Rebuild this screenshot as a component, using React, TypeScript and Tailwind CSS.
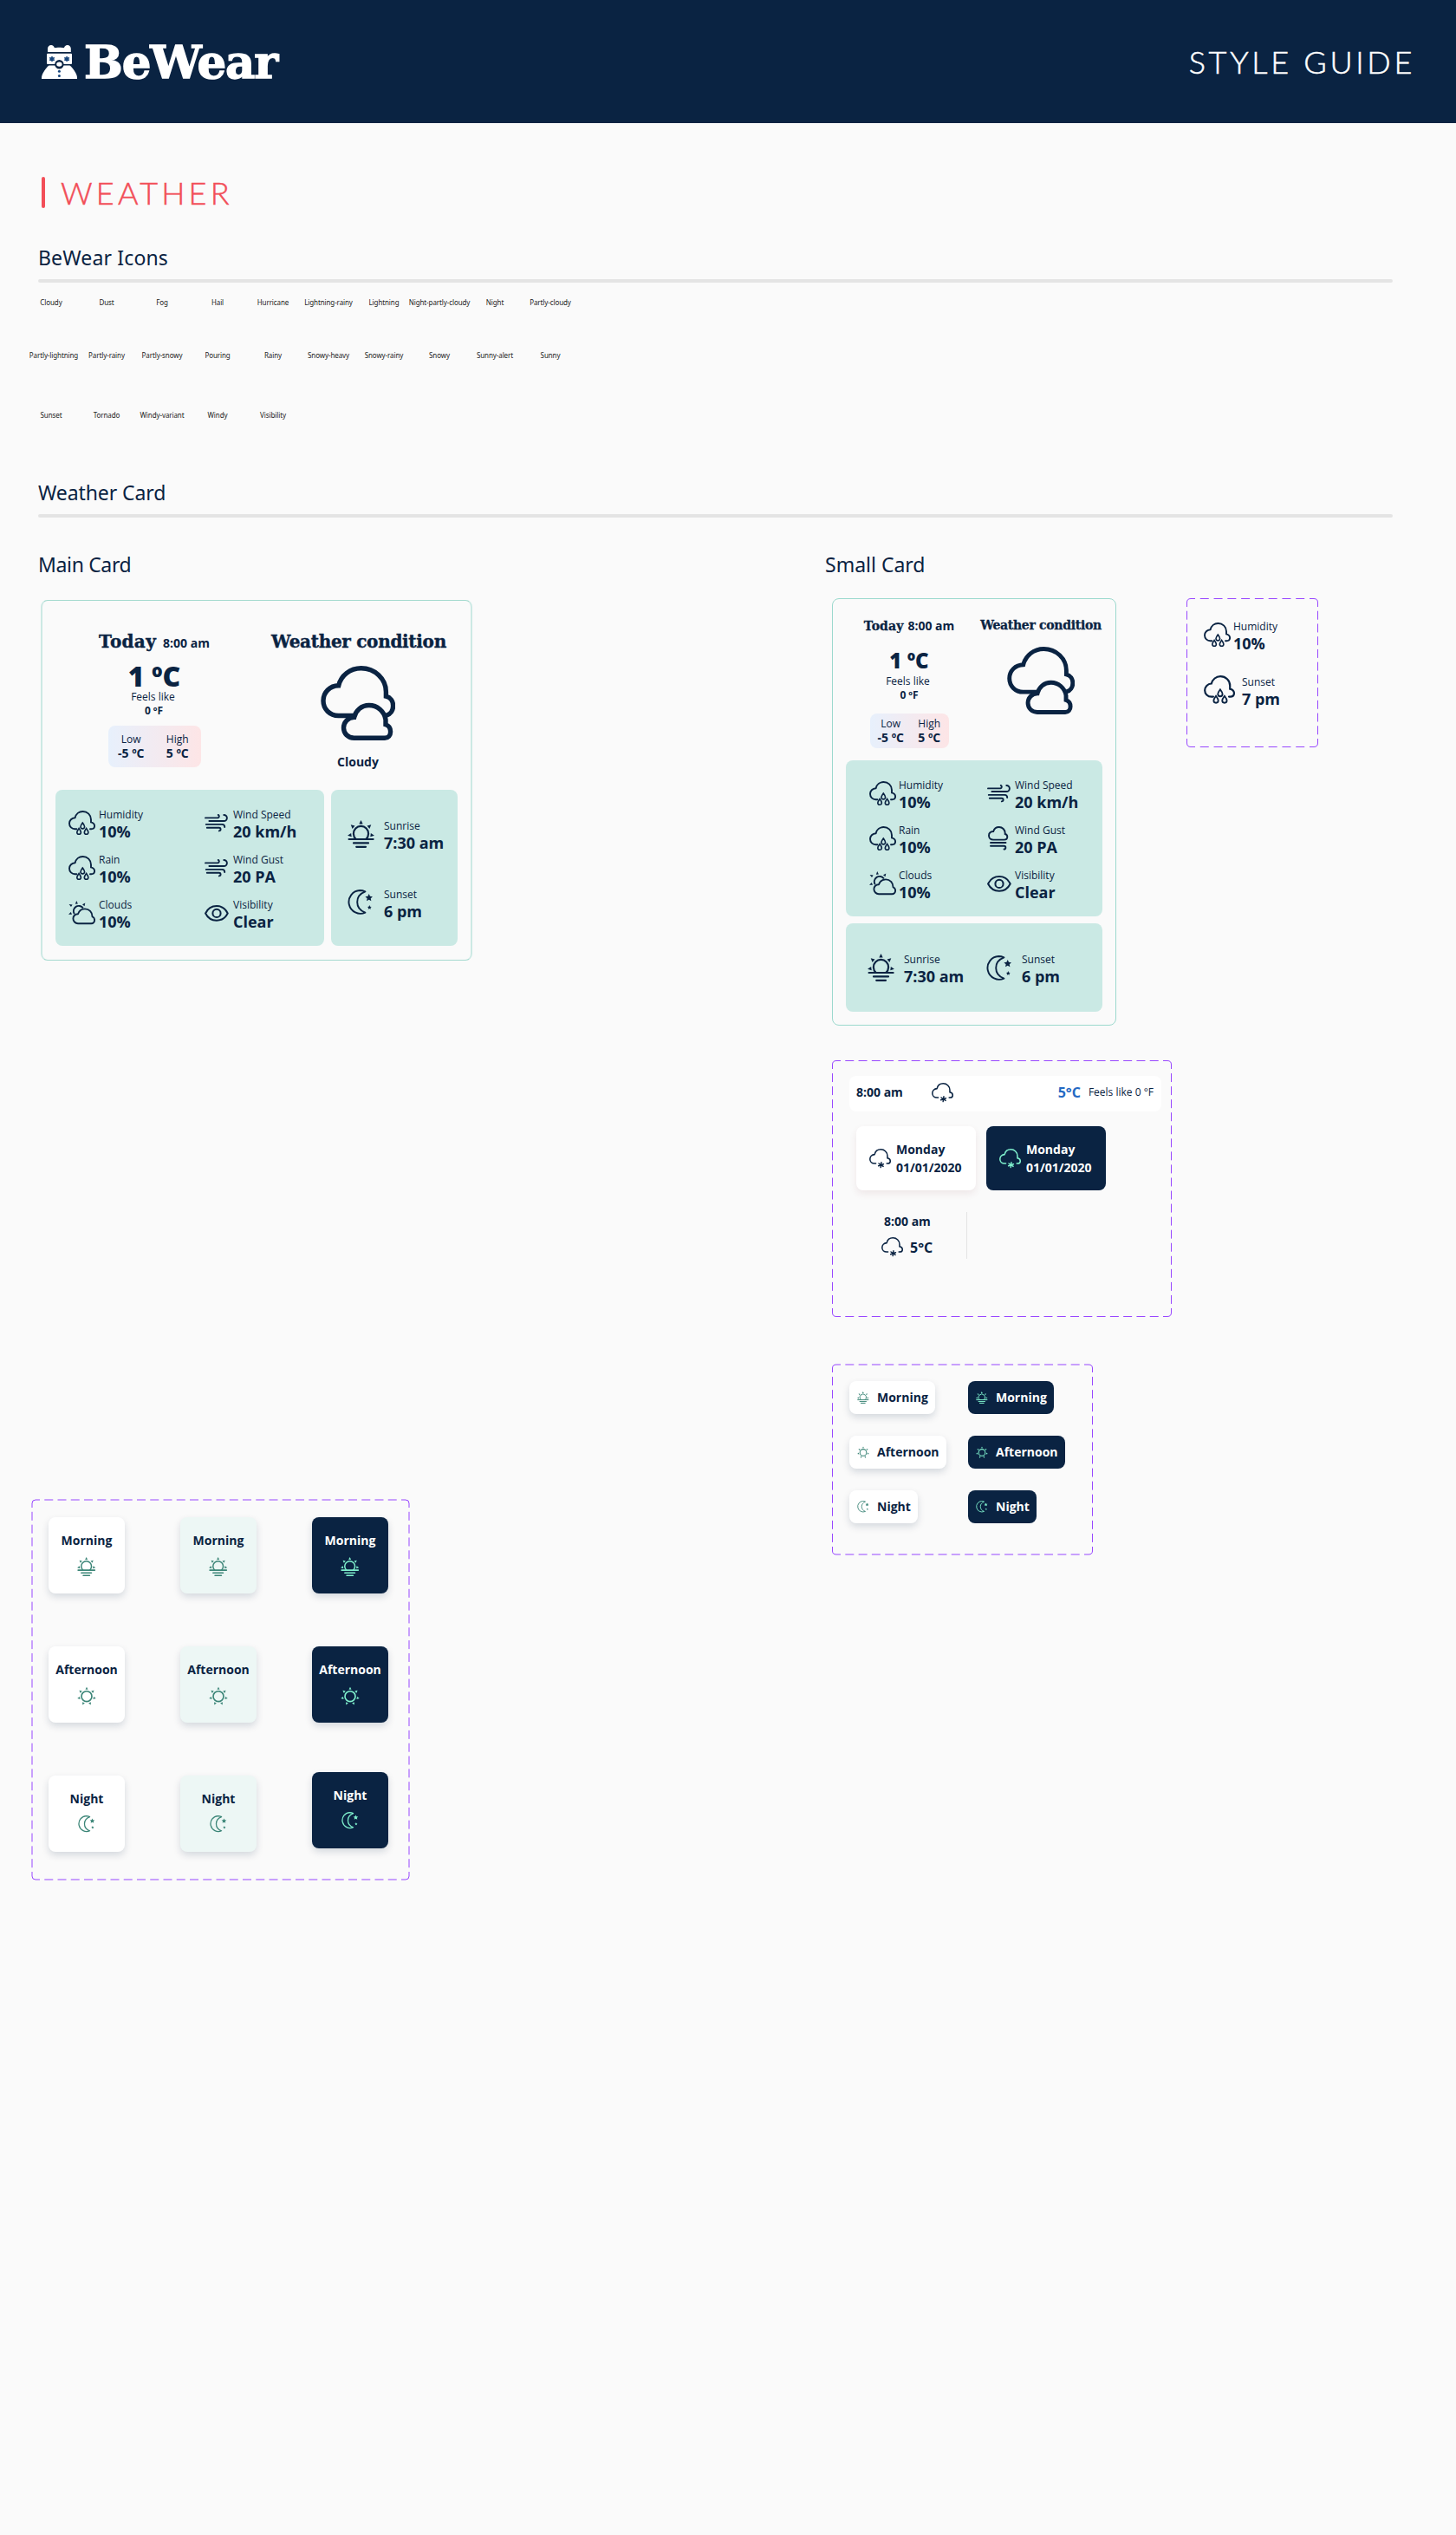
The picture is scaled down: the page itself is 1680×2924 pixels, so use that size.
import React from "react";

const NAVY = "#0a2342";
const TEAL = "#3b8577";
const MINT = "#7ff0cd";

const body = "font-['Open_Sans','Noto_Sans',sans-serif]";
const serif = "font-['DejaVu_Serif',serif] font-bold";

type IconProps = { color?: string; size?: number };

function CloudyIcon({ size = 86 }: IconProps) {
  return (
    <svg width={size} height={size} viewBox="0 0 86 86" fill="none" stroke={NAVY} strokeWidth="5.4" className="shrink-0">
      <path d="M39 57.5H20.5C10.5 57.5 3 50 3 40.3S10.5 23 20.7 22.8C23.5 11 34 2.8 46.7 2.8C62.5 2.8 75.4 15 75.4 30V35.2C80.5 36.5 83.6 41 83.6 46C83.6 51.5 80.5 56 75.5 57.3" />
      <path d="M38.7 59.3C31.5 59.5 26.5 65 26.5 71.5S31.5 83.2 38.5 83.2H74C78 83.2 80.6 80 80.6 76C80.6 72 78.5 69 75 67.8V62C73.5 52.5 65.5 45.5 55.8 45.5C47 45.5 40.5 51.5 38.7 59.3Z" />
    </svg>
  );
}

const CLOUD = "M9.4 21.2H7.6C3.8 21.2 1 18.3 1 14.8S3.8 8.4 7.6 8.2C8.6 4 12.2 1 16.5 1C21.8 1 26 5 26 10.2V13.4C28.4 14 30.1 15.6 30.1 17.7C30.1 19.8 28.7 21.2 26.3 21.2H25";

function Drop({ x, y }: { x: number; y: number }) {
  return (
    <path
      transform={`translate(${x} ${y})`}
      d="M0-3.6C1.5-1.6 2.3-.2 2.3 1A2.3 2.3 0 1 1-2.3 1C-2.3-.2-1.5-1.6 0-3.6Z"
    />
  );
}

function RainIcon({ size = 31 }: IconProps) {
  return (
    <svg width={size} height={(size * 29) / 31} viewBox="0 0 31 29" fill="none" stroke={NAVY} strokeWidth="1.9" strokeLinecap="round" className="shrink-0">
      <path d={CLOUD} />
      <g strokeWidth="1.6">
        <Drop x={16.3} y={17.6} />
        <Drop x={12.1} y={24} />
        <Drop x={20.6} y={24} />
      </g>
    </svg>
  );
}

function SnowIcon({ color = NAVY }: IconProps) {
  return (
    <svg width="25" height="23" viewBox="0 0 31 28.5" fill="none" stroke={color} strokeWidth="1.9" strokeLinecap="round" className="shrink-0">
      <path d={CLOUD} />
      <path strokeWidth="1.8" d="M16.8 19.6V26.8M13.4 21.5L20.2 24.9M20.2 21.5L13.4 24.9" transform="rotate(8 16.8 23.2)" />
    </svg>
  );
}

function WindIcon() {
  return (
    <svg width="27" height="21" viewBox="0 0 27 21" fill="none" stroke={NAVY} strokeWidth="1.9" strokeLinecap="round" className="shrink-0">
      <path d="M1 4.4H15.4A1.9 1.9 0 0 0 15.8.9" />
      <path d="M5.4 8H22.3A3.6 3.5 0 0 0 22.3 1" />
      <path d="M1.8 11.9H20.2A3.2 3 0 0 1 23.2 15" />
      <path d="M2.8 15.8H16.8A1.8 1.8 0 0 1 16.8 19.4" />
    </svg>
  );
}

function GustIcon() {
  return (
    <svg width="24" height="28" viewBox="0 0 24 28" fill="none" stroke={NAVY} strokeWidth="1.9" strokeLinecap="round" className="shrink-0">
      <path d="M6 15.6H18.6C20.8 15.6 22.3 14.2 22.3 12.3C22.3 10.6 21.2 9.4 19.7 9V7.8C19.7 4 16.6 1 12.8 1C9.6 1 7 3 6.2 6C3 6.2 1 8 1 10.8S3 15.6 6 15.6Z" />
      <path d="M3 19H20.5M3 22.8H18.5A1.8 1.8 0 0 1 18.5 26.5" />
    </svg>
  );
}

function PartlyIcon() {
  return (
    <svg width="31" height="28" viewBox="0 0 31 28" fill="none" stroke={NAVY} strokeWidth="1.9" strokeLinejoin="round" className="shrink-0">
      <path d="M11 26.2H26.2C28.6 26.2 30.1 24.3 30.1 22.2C30.1 20.4 29.2 19 27.6 18.4C27.6 13 23.8 9.4 19 9.4C15 9.4 12.2 11.8 11 15.2C7.6 15.2 5.4 17.6 5.4 20.6S7.8 26.2 11 26.2Z" />
      <path d="M6.8 15.2A6 6 0 1 1 16.9 8.6" />
      <path fill={NAVY} stroke="none" d="M9.2 0L10.9 3.5L7.9 3.7ZM19.3 2.4L18.5 6.2L16 4.2ZM.6 4L4.6 4.5L3 7ZM0 15.8L2.8 12.9L4 15.8Z" />
    </svg>
  );
}

function EyeIcon() {
  return (
    <svg width="28" height="19" viewBox="0 0 28 19" fill="none" stroke={NAVY} strokeWidth="2" className="shrink-0">
      <path d="M1.1 9.5C3.6 4.3 8.4 1.1 14 1.1S24.2 4.3 26.7 9.5C24.2 14.5 19.5 17.7 14 17.7S3.6 14.5 1.1 9.5Z" />
      <circle cx="14" cy="9.4" r="4.6" />
    </svg>
  );
}

function Ray({ angle, cx, cy, r }: { angle: number; cx: number; cy: number; r: number }) {
  return <path transform={`rotate(${angle} ${cx} ${cy})`} d={`M${cx} ${cy - r - 4.4}L${cx + 2.2} ${cy - r}H${cx - 2.2}Z`} stroke="none" />;
}

function SunriseIcon({ color = NAVY, size = 32 }: IconProps) {
  return (
    <svg width={size} height={size} viewBox="0 0 32 32" fill="none" stroke={color} strokeWidth="2.2" strokeLinecap="round" className="shrink-0">
      <path d="M9.6 21.8A8.6 8.6 0 1 1 21.4 21.8" />
      <path d="M1.6 22H29.6M7 26.4H24M10.2 30.8H21" />
      <g fill={color}>
        {[0, 49, -49, 98, -98].map((a) => (
          <Ray key={a} angle={a} cx={15.5} cy={15.6} r={11.2} />
        ))}
      </g>
    </svg>
  );
}

function SunIcon({ color = NAVY, size = 32 }: IconProps) {
  return (
    <svg width={size} height={size} viewBox="0 0 32 32" fill="none" stroke={color} strokeWidth="2.4" className="shrink-0">
      <circle cx="16" cy="17" r="8.7" />
      <g fill={color}>
        {[0, 51.4, -51.4, 102.8, -102.8, 154.3, -154.3].map((a) => (
          <Ray key={a} angle={a} cx={16} cy={17} r={11.6} />
        ))}
      </g>
    </svg>
  );
}

function star(cx: number, cy: number, r: number) {
  return Array.from({ length: 10 }, (_, i) => {
    const a = ((i * 36 - 90) * Math.PI) / 180;
    const d = i % 2 ? r * 0.48 : r;
    return `${(cx + d * Math.cos(a)).toFixed(2)},${(cy + d * Math.sin(a)).toFixed(2)}`;
  }).join(" ");
}

function MoonIcon({ color = NAVY, size = 30 }: IconProps) {
  return (
    <svg width={size} height={size} viewBox="0 0 30 30" fill="none" stroke={color} strokeWidth="1.9" strokeLinejoin="round" className="shrink-0">
      <path d="M20.4 2.4C18 1.3 15.8 1 14.3 1A13.4 13.4 0 1 0 20.4 26.6C14.6 24.5 11.2 20 11.2 14.5S14.6 4.6 20.4 2.4Z" />
      <polygon points={star(24.7, 9.6, 4.5)} fill={color} stroke="none" />
      <polygon points={star(25.3, 20.7, 2.6)} fill={color} stroke="none" />
    </svg>
  );
}

function BearLogo() {
  return (
    <svg width="41" height="39" viewBox="0 0 41 39" className="shrink-0">
      <path fill="#fff" d="M7 8V4C7 1.8 8.8 0 11 0C13 0 14.4 1.3 14.9 3.2C16.6 2.5 24.2 2.5 25.9 3.2C26.4 1.3 27.8 0 29.8 0C32 0 33.8 1.8 33.8 4V8Z" />
      <rect x="6" y="9.8" width="29" height="12.2" rx="1" fill="#fff" />
      <path fill="#fff" d="M8.5 23.6H32.5C35.5 25.5 41 33.5 41 37.5V39H0V37.5C0 33.5 5.5 25.5 8.5 23.6Z" />
      <circle cx="20.4" cy="22.3" r="5.2" fill={NAVY} />
      <ellipse cx="20.4" cy="22.1" rx="3.2" ry="2.6" fill="#fff" />
      <circle cx="20.4" cy="30.2" r="1.5" fill="#17457c" />
      <circle cx="20.4" cy="35.4" r="1.5" fill="#17457c" />
      <g stroke="#17457c" strokeWidth="1.5">
        <path d="M12 13V19M9.2 14.5L14.8 17.5M14.8 14.5L9.2 17.5" />
        <path d="M29.1 13V19M26.3 14.5L31.9 17.5M31.9 14.5L26.3 17.5" />
      </g>
    </svg>
  );
}

type FrameProps = { w: number; h: number; ix?: number; iy?: number; className: string; children: React.ReactNode };

/** Rounded dashed outline that surrounds a group of component variants. */
function Frame({ w, h, ix = 0.5, iy = 0.5, className, children }: FrameProps) {
  const px = (w - 10) / Math.round((w - 10) / 15);
  const py = (h - 10) / Math.round((h - 10) / 15);
  const r = w - ix;
  const b = h - iy;
  return (
    <div className={`relative ${className}`}>
      <svg width={w} height={h} className="pointer-events-none absolute inset-0" fill="none" stroke="#9747ff">
        <path d={`M${ix} 5Q${ix} ${iy} 5 ${iy}M${w - 5} ${iy}Q${r} ${iy} ${r} 5M${r} ${h - 5}Q${r} ${b} ${w - 5} ${b}M5 ${b}Q${ix} ${b} ${ix} ${h - 5}`} />
        <path d={`M5 ${iy}H${w - 5}M5 ${b}H${w - 5}`} strokeDasharray={`10 ${px - 10}`} strokeDashoffset={5} />
        <path d={`M${ix} 5V${h - 5}M${r} 5V${h - 5}`} strokeDasharray={`10 ${py - 10}`} strokeDashoffset={5} />
      </svg>
      {children}
    </div>
  );
}

function Stat({ icon, label, value, iconBox, className = "" }: { icon: React.ReactNode; label: string; value: string; iconBox: string; className?: string }) {
  return (
    <div className={`flex h-[38px] whitespace-nowrap ${className}`}>
      <div className={`shrink-0 ${iconBox}`}>{icon}</div>
      <div>
        <div className="text-xs leading-4">{label}</div>
        <div className="text-lg leading-[22px] font-bold">{value}</div>
      </div>
    </div>
  );
}

function LowHigh({ className }: { className: string }) {
  return (
    <div className={`flex rounded-lg bg-linear-to-r from-[#e7f0fc] to-[#fde5e6] text-center ${className}`}>
      {[["Low", "-5 ºC"], ["High", "5 ºC"]].map(([k, v]) => (
        <div key={k} className="flex-1">
          <div className="text-xs leading-4">{k}</div>
          <div className="text-sm leading-4 font-bold">{v}</div>
        </div>
      ))}
    </div>
  );
}

function MainCard() {
  return (
    <div className="mt-[25px] ml-[47px] h-[416px] w-[498px] rounded-lg border-x-2 border-y border-x-[#cce9e4] border-y-[#a5dacf]">
      <div className="flex h-[218px] whitespace-nowrap">
        <div className="flex w-[258px] flex-col items-center pt-[33px]">
          <div className="flex items-baseline">
            <span className={`${serif} text-xl leading-7 tracking-[0.3px] [-webkit-text-stroke:0.4px]`}>Today</span>
            <span className="ml-2 text-sm font-bold">8:00 am</span>
          </div>
          <div className="mt-[10px] text-[32px] leading-8 font-extrabold">1 ºC</div>
          <div className="mr-[3px] text-xs leading-4">Feels like</div>
          <div className="mr-px text-xs leading-4 font-bold">0 ºF</div>
          <LowHigh className="mt-[9px] h-12 w-[107px] pt-2" />
        </div>
        <div className="flex w-[212px] flex-col items-center pt-[33px]">
          <div className={`${serif} pl-[2px] text-xl leading-7 tracking-[-0.3px] [-webkit-text-stroke:0.4px]`}>Weather condition</div>
          <div className="mt-[14px]"><CloudyIcon /></div>
          <div className="mt-[15px] text-sm leading-5 font-bold">Cloudy</div>
        </div>
      </div>
      <div className="ml-[15px] flex gap-2">
        <div className="flex h-[180px] w-[310px] rounded-lg bg-[#cae9e4] pt-[21px] pl-[15px]">
          <div className="flex w-[157px] flex-col gap-[14px]">
            <Stat icon={<RainIcon />} label="Humidity" value="10%" iconBox="w-[35px] pt-[3px]" />
            <Stat icon={<RainIcon />} label="Rain" value="10%" iconBox="w-[35px] pt-[3px]" />
            <Stat icon={<PartlyIcon />} label="Clouds" value="10%" iconBox="w-[35px] pt-[3px]" />
          </div>
          <div className="flex flex-col gap-[14px]">
            <Stat icon={<WindIcon />} label="Wind Speed" value="20 km/h" iconBox="w-[33px] pt-[7px]" />
            <Stat icon={<WindIcon />} label="Wind Gust" value="20 PA" iconBox="w-[33px] pt-[7px]" />
            <Stat icon={<EyeIcon />} label="Visibility" value="Clear" iconBox="w-[33px] pt-[8px]" />
          </div>
        </div>
        <div className="flex h-[180px] w-[146px] flex-col gap-[41px] rounded-lg bg-[#cae9e4] pt-[34px] pl-[19px]">
          <Stat icon={<SunriseIcon />} label="Sunrise" value="7:30 am" iconBox="w-[42px] pt-px" />
          <Stat icon={<MoonIcon />} label="Sunset" value="6 pm" iconBox="w-[42px] pt-[2px]" />
        </div>
      </div>
    </div>
  );
}

function SmallCard() {
  return (
    <div className="ml-2 h-[493px] w-[328px] rounded-lg border border-[#9bd9cd]">
      <div className="flex h-[186px] whitespace-nowrap">
        <div className="flex w-[176px] flex-col items-center pt-[21px]">
          <div className="flex items-baseline">
            <span className={`${serif} text-sm leading-5 tracking-[0.1px] [-webkit-text-stroke:0.3px]`}>Today</span>
            <span className="ml-[5px] text-sm leading-5 font-bold">8:00 am</span>
          </div>
          <div className="mt-[18px] text-2xl leading-6 font-extrabold">1 ºC</div>
          <div className="mt-1 mr-[3px] text-xs leading-4">Feels like</div>
          <div className="text-xs leading-4 font-bold">0 ºF</div>
          <LowHigh className="mt-[13px] h-10 w-[91px] pt-1 pl-[2px]" />
        </div>
        <div className="flex w-[128px] flex-col items-center pt-5">
          <div className={`${serif} text-sm leading-5 tracking-[-0.3px] [-webkit-text-stroke:0.3px]`}>Weather condition</div>
          <div className="mt-[15px]"><CloudyIcon size={78} /></div>
        </div>
      </div>
      <div className="mx-[15px] flex h-[180px] rounded-lg bg-[#cae9e4] pt-[21px] pl-[27px]">
        <div className="flex w-[136px] flex-col gap-[14px]">
          <Stat icon={<RainIcon />} label="Humidity" value="10%" iconBox="w-[34px] pt-[3px]" />
          <Stat icon={<RainIcon />} label="Rain" value="10%" iconBox="w-[34px] pt-[3px]" />
          <Stat icon={<PartlyIcon />} label="Clouds" value="10%" iconBox="w-[34px] pt-[3px]" />
        </div>
        <div className="flex flex-col gap-[14px]">
          <Stat icon={<WindIcon />} label="Wind Speed" value="20 km/h" iconBox="w-8 pt-[7px]" />
          <Stat icon={<GustIcon />} label="Wind Gust" value="20 PA" iconBox="w-8 pt-[3px] pl-px" />
          <Stat icon={<EyeIcon />} label="Visibility" value="Clear" iconBox="w-8 pt-[8px]" />
        </div>
      </div>
      <div className="mx-[15px] mt-2 flex h-[102px] rounded-lg bg-[#cae9e4] pt-[34px] pl-[25px]">
        <Stat className="w-[137px]" icon={<SunriseIcon />} label="Sunrise" value="7:30 am" iconBox="w-[42px] pt-px" />
        <Stat icon={<MoonIcon />} label="Sunset" value="6 pm" iconBox="w-[41px] pt-[3px]" />
      </div>
    </div>
  );
}

function DayCard({ dark }: { dark?: boolean }) {
  return (
    <div className={`flex h-[74px] w-[138px] rounded-lg pl-[15px] ${dark ? "bg-[#0a2342] text-white" : "bg-white shadow-[0_4px_8px_rgba(120,40,60,0.09)]"}`}>
      <div className="w-[31px] pt-[26px]"><SnowIcon color={dark ? MINT : NAVY} /></div>
      <div className="pt-[16px] text-sm leading-[21px] font-bold whitespace-nowrap">
        Monday
        <br />
        01/01/2020
      </div>
    </div>
  );
}

const PERIODS = [
  { name: "Morning", Icon: SunriseIcon, width: "w-[99px]" },
  { name: "Afternoon", Icon: SunIcon, width: "w-[112px]" },
  { name: "Night", Icon: MoonIcon, width: "w-[79px]" },
];

function Pills({ dark }: { dark?: boolean }) {
  return (
    <div className="flex w-[137px] flex-col gap-[25px]">
      {PERIODS.map(({ name, Icon, width }) => (
        <div
          key={name}
          className={`flex h-[38px] items-center rounded-lg pl-[9px] text-sm font-bold ${width} ${dark ? "bg-[#0a2342] text-white" : "bg-white shadow-[0_4px_8px_rgba(10,35,66,0.15)]"}`}
        >
          <Icon size={14} color={dark ? MINT : TEAL} />
          <span className="ml-[9px]">{name}</span>
        </div>
      ))}
    </div>
  );
}

const TILE_STYLES = [
  { tile: "bg-white", icon: TEAL, night: "" },
  { tile: "bg-[#edf7f5]", icon: TEAL, night: "" },
  { tile: "bg-[#0a2342] text-white", icon: MINT, night: "-mt-1" },
];

function Tiles() {
  return (
    <div className="flex gap-16 pt-[21px] pl-[20px]">
      {TILE_STYLES.map(({ tile, icon, night }) => (
        <div key={tile} className="flex flex-col gap-[61px]">
          {PERIODS.map(({ name, Icon }) => (
            <div
              key={name}
              className={`flex h-[88px] w-[88px] flex-col items-center rounded-lg pt-[17px] text-sm leading-5 font-bold shadow-[0_4px_8px_rgba(10,35,66,0.15)] ${tile} ${name === "Night" ? night : ""}`}
            >
              {name}
              <div className="mt-[9px]"><Icon size={name === "Night" ? 20 : 22} color={icon} /></div>
            </div>
          ))}
        </div>
      ))}
    </div>
  );
}

const ICON_ROWS = [
  ["Cloudy", "Dust", "Fog", "Hail", "Hurricane", "Lightning-rainy", "Lightning", "Night-partly-cloudy", "Night", "Partly-cloudy"],
  ["Partly-lightning", "Partly-rainy", "Partly-snowy", "Pouring", "Rainy", "Snowy-heavy", "Snowy-rainy", "Snowy", "Sunny-alert", "Sunny"],
  ["Sunset", "Tornado", "Windy-variant", "Windy", "Visibility"],
];

function IconLabels({ names, className }: { names: string[]; className: string }) {
  return (
    <div className={`ml-[27px] grid w-[640px] grid-cols-10 font-['Noto_Sans',sans-serif] text-[8px] leading-3 tracking-[-0.1px] text-[#222] ${className}`}>
      {names.map((n) => (
        <div key={n} className={`flex justify-center whitespace-nowrap ${n === "Partly-lightning" ? "pl-[6px]" : ""}`}>{n}</div>
      ))}
    </div>
  );
}

function Heading({ children, className = "" }: { children: string; className?: string }) {
  return <h2 className={`h-8 font-['Noto_Sans',sans-serif] text-[23px] leading-8 font-normal whitespace-nowrap ${className}`}>{children}</h2>;
}

export default function App() {
  return (
    <div className={`h-[2924px] w-[1680px] overflow-hidden bg-[#fafafa] text-[#0a2342] ${body}`}>
      <header className="flex h-[142px] items-center justify-between bg-[#0a2342] pr-[47px] pl-12 text-white">
        <div className="flex items-center">
          <BearLogo />
          <span className={`${serif} ml-2 text-[53px] leading-none tracking-[-1.1px] [-webkit-text-stroke:1.4px]`}>BeWear</span>
        </div>
        <span className="font-['Lato',sans-serif] text-[36px] leading-none font-light tracking-[3.7px] [-webkit-text-stroke:0.5px]">STYLE GUIDE</span>
      </header>

      <div className="mt-[62px] ml-12 flex h-9 items-center">
        <div className="h-9 w-1 rounded-full bg-[#f24e58]" />
        <h1 className="ml-[18px] font-['Lato',sans-serif] text-[36px] leading-none font-light tracking-[4.2px] text-[#f24e58] [-webkit-text-stroke:0.5px]">WEATHER</h1>
      </div>

      <Heading className="mt-[41px] ml-[44px] tracking-[0.15px]">BeWear Icons</Heading>
      <div className="mt-[9px] ml-[44px] h-1 w-[1563px] rounded-xs bg-[#e4e4e4]" />
      <IconLabels names={ICON_ROWS[0]} className="mt-[17px]" />
      <IconLabels names={ICON_ROWS[1]} className="mt-[49px]" />
      <IconLabels names={ICON_ROWS[2]} className="mt-[57px]" />

      <Heading className="mt-[67px] ml-[44px] tracking-[-0.1px]">Weather Card</Heading>
      <div className="mt-[9px] ml-[44px] h-1 w-[1563px] rounded-xs bg-[#e4e4e4]" />

      <div className="mt-[38px] flex items-start">
        <section className="w-[952px]">
          <Heading className="ml-[44px] tracking-[-0.35px]">Main Card</Heading>
          <MainCard />
          <Frame w={437} h={440} ix={1} iy={1} className="mt-[621px] ml-9 h-[440px] w-[437px]">
            <Tiles />
          </Frame>
        </section>

        <section>
          <Heading>Small Card</Heading>
          <div className="mt-[23px] flex items-start">
            <SmallCard />
            <Frame w={152} h={172} className="ml-[81px] h-[172px] w-[152px]">
              <div className="flex flex-col gap-[26px] pt-[25px] pl-5">
                <Stat icon={<RainIcon />} label="Humidity" value="10%" iconBox="w-[34px] pt-[3px]" />
                <Stat icon={<RainIcon size={36} />} label="Sunset" value="7 pm" iconBox="w-[44px]" />
              </div>
            </Frame>
          </div>

          <Frame w={392} h={296} className="mt-10 ml-2 h-[296px] w-[392px]">
            <div className="pt-[18px] pl-5">
              <div className="flex h-[41px] w-[360px] items-center rounded-lg bg-white pr-[9px] pb-[3px] pl-2 whitespace-nowrap">
                <span className="w-[87px] text-sm leading-5 font-bold">8:00 am</span>
                <SnowIcon />
                <span className="ml-auto text-base leading-5 font-bold text-[#2569c3]">5°C</span>
                <span className="ml-[9px] text-xs leading-4">Feels like 0 °F</span>
              </div>
              <div className="mt-[17px] ml-2 flex gap-3">
                <DayCard />
                <DayCard dark />
              </div>
              <div className="mt-[25px] h-[54px] w-[136px] border-r border-[#e4e4e4] whitespace-nowrap">
                <div className="pt-px pl-10 text-sm leading-5 font-bold">8:00 am</div>
                <div className="mt-[8px] flex h-[23px] items-center pl-[37px]">
                  <SnowIcon />
                  <span className="ml-[8px] text-base font-bold">5°C</span>
                </div>
              </div>
            </div>
          </Frame>

          <Frame w={301} h={221} iy={1} className="mt-[54px] ml-2 h-[221px] w-[301px]">
            <div className="flex pt-[20px] pl-5">
              <Pills />
              <Pills dark />
            </div>
          </Frame>
        </section>
      </div>
    </div>
  );
}
